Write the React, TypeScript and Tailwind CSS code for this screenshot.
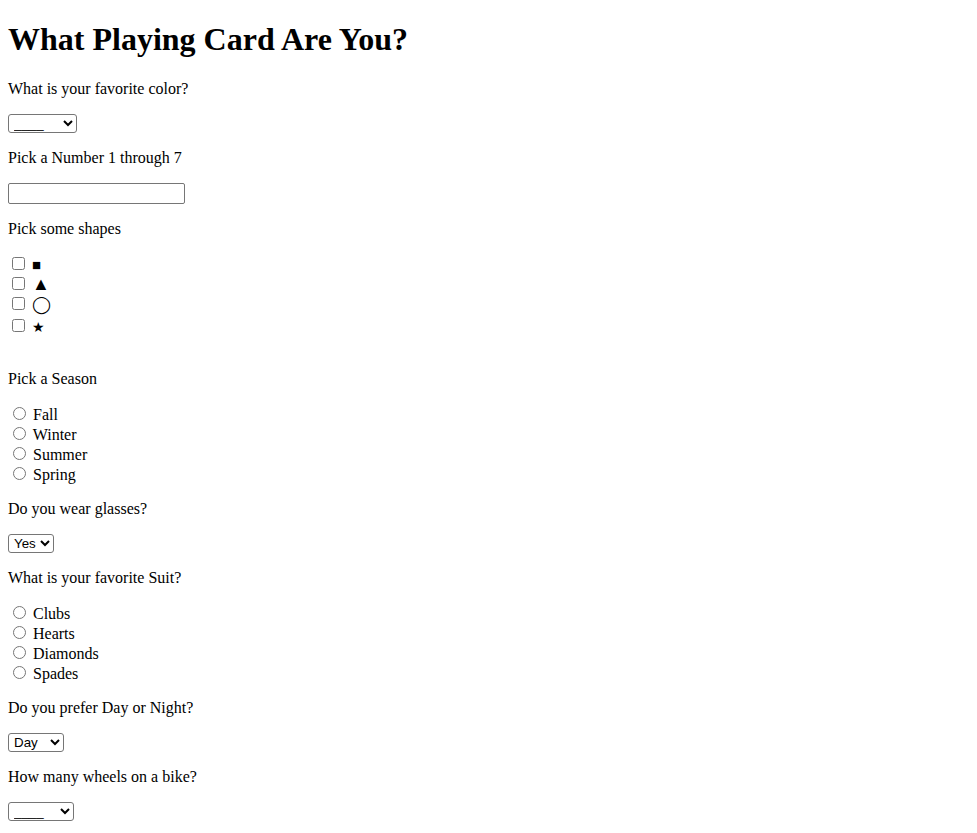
import React from 'react';

const selectCls =
  "h-[19px] border border-[#767676] rounded-[3px] bg-white text-black font-['Liberation_Sans',Arial,sans-serif] text-[13.333px] leading-[normal] pl-[1px] align-baseline";

const Question = ({ text }: { text: string }) => <p className="my-4">{text}</p>;

const Check = ({ label, cls, row }: { label: string; cls: string; row: string }) => (
  <div className={row}>
    <input type="checkbox" className="m-[3px_3px_3px_4px] align-baseline w-[13px] h-[13px]" />{' '}
    <span className={`leading-none ${cls}`}>{label}</span>
  </div>
);

const Radio = ({ name, label }: { name: string; label: string }) => (
  <>
    <input type="radio" name={name} className="m-[3px_3px_0px_5px] align-baseline w-[13px] h-[13px]" /> {label}
    <br />
  </>
);

export default function App() {
  return (
    <div className="px-2 pb-2 bg-white text-black font-['Liberation_Serif','Times_New_Roman',serif] text-[16px] leading-[normal]">
      <h1 className="text-[32px] font-bold leading-[normal] my-[21.44px]">What Playing Card Are You?</h1>

      <Question text="What is your favorite color?" />
      <select className={`${selectCls} w-[69px]`} defaultValue="none">
        <option value="none">____</option>
        <option>Red</option>
        <option>Black</option>
      </select>

      <Question text="Pick a Number 1 through 7" />
      <input
        type="text"
        className="w-[177px] h-[21px] border border-[#767676] rounded-[2px] px-[2px] py-[1px] bg-white font-['Liberation_Sans',Arial,sans-serif] text-[13.333px] align-baseline"
      />

      <Question text="Pick some shapes" />
      <div>
        <Check label="■" cls="text-[15px]" row="h-[20px]" />
        <Check label="▲" cls="text-[18px]" row="h-[20px]" />
        <Check label="◯" cls="text-[17px]" row="h-[22px]" />
        <Check label="★" cls="text-[14px]" row="h-[20px]" />
        <br />
      </div>

      <Question text="Pick a Season" />
      <div>
        <Radio name="season" label="Fall" />
        <Radio name="season" label="Winter" />
        <Radio name="season" label="Summer" />
        <Radio name="season" label="Spring" />
      </div>

      <Question text="Do you wear glasses?" />
      <select className={`${selectCls} w-[46px]`}>
        <option>Yes</option>
        <option>No</option>
      </select>

      <Question text="What is your favorite Suit?" />
      <div>
        <Radio name="suit" label="Clubs" />
        <Radio name="suit" label="Hearts" />
        <Radio name="suit" label="Diamonds" />
        <Radio name="suit" label="Spades" />
      </div>

      <Question text="Do you prefer Day or Night?" />
      <select className={`${selectCls} w-[56px]`}>
        <option>Day</option>
        <option>Night</option>
      </select>

      <Question text="How many wheels on a bike?" />
      <select className={`${selectCls} w-[66px]`} defaultValue="none">
        <option value="none">____</option>
        <option>1</option>
        <option>2</option>
        <option>3</option>
      </select>
    </div>
  );
}
